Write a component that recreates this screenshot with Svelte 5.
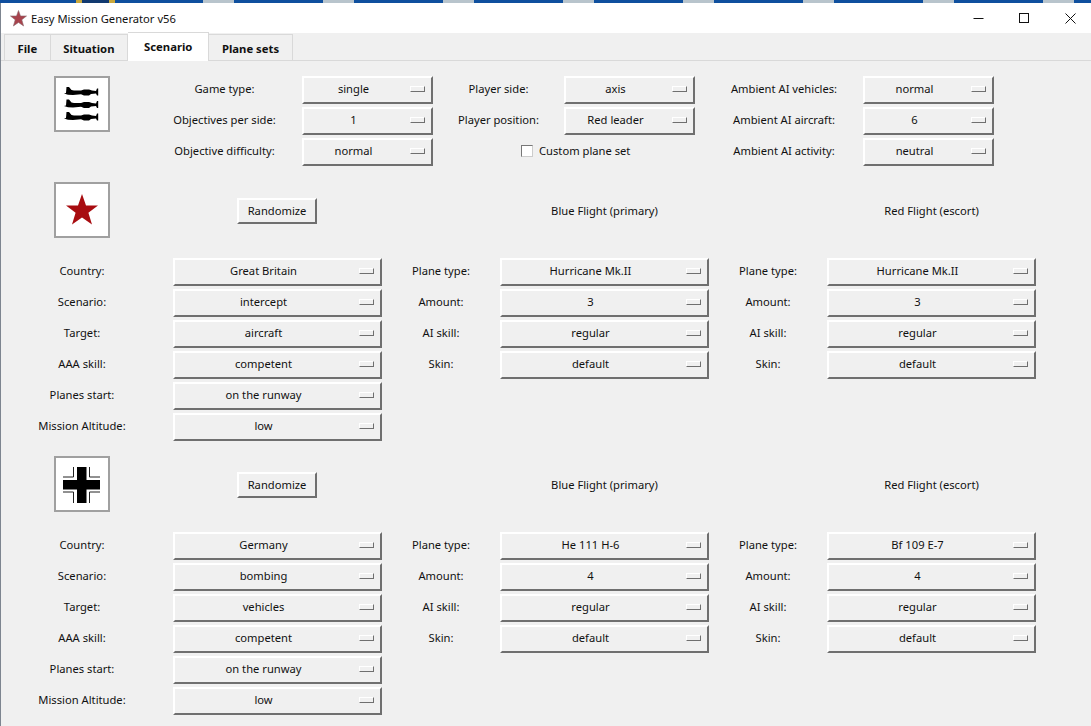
<script lang="ts">
	const topRows = [
		['Game type:', 'single', 'Player side:', 'axis', 'Ambient AI vehicles:', 'normal'],
		['Objectives per side:', '1', 'Player position:', 'Red leader', 'Ambient AI aircraft:', '6'],
		['Objective difficulty:', 'normal', null, null, 'Ambient AI activity:', 'neutral']
	];

	const flightLabels = ['Plane type:', 'Amount:', 'AI skill:', 'Skin:'];
	const sideLabels = ['Country:', 'Scenario:', 'Target:', 'AAA skill:', 'Planes start:', 'Mission Altitude:'];

	const sides = [
		{
			icon: 'star',
			values: ['Great Britain', 'intercept', 'aircraft', 'competent', 'on the runway', 'low'],
			blue: ['Hurricane Mk.II', '3', 'regular', 'default'],
			red: ['Hurricane Mk.II', '3', 'regular', 'default']
		},
		{
			icon: 'cross',
			values: ['Germany', 'bombing', 'vehicles', 'competent', 'on the runway', 'low'],
			blue: ['He 111 H-6', '4', 'regular', 'default'],
			red: ['Bf 109 E-7', '4', 'regular', 'default']
		}
	];

	const tabs = ['File', 'Situation', 'Scenario', 'Plane sets'];
	let active = $state('Scenario');
	let customSet = $state(false);
</script>

{#snippet option(value: string)}
	<button class="option">
		<span>{value}</span>
		<span class="indicator"></span>
	</button>
{/snippet}

<div class="desktop"></div>
<div class="window">
	<header class="titlebar">
		<svg class="app-icon" width="17" height="17" viewBox="0 0 17 17">
			<polygon points="8.5,0.5 10.5,6 16.5,6 11.8,9.8 13.6,16 8.5,12.4 3.4,16 5.2,9.8 0.5,6 6.5,6" fill="#a8424c" stroke="#8c6a6e" stroke-width="0.6" />
		</svg>
		<span class="title">Easy Mission Generator v56</span>
		<div class="controls">
			<svg width="11" height="11" viewBox="0 0 11 11"><path d="M0.5 5.5H10.5" stroke="#111" fill="none" /></svg>
			<svg width="11" height="11" viewBox="0 0 11 11"><rect x="0.5" y="0.5" width="9" height="9" stroke="#111" fill="none" /></svg>
			<svg width="11" height="11" viewBox="0 0 11 11"><path d="M0.5 0.5L10.5 10.5M10.5 0.5L0.5 10.5" stroke="#111" fill="none" /></svg>
		</div>
	</header>

	<nav class="tabs">
		{#each tabs as tab}
			<button class="tab" class:active={tab === active} onclick={() => (active = tab)}>{tab}</button>
		{/each}
	</nav>

	<main class="content">
		<section class="top-grid">
			<div class="icon-box top-icon">
				<svg width="36" height="34" viewBox="0 0 36 34">
					{#each [5, 17.5, 30] as y}
						<path
							transform="translate(0 {y})"
							d="M0 1.5L2 1L2.5 -5L5 -5L7.5 -2L10 -1.5L17 -1.5L20 -2.5L25 -2.5L28 -1.5L32 -1L33 -3.5L34.2 -3.5L34.2 3.5L33 3.5L32 1.5L27 2L25 3.5L20 3.5L17 2.2L9 3L4 2.8Z"
							fill="#000"
						/>
					{/each}
				</svg>
			</div>
			{#each topRows as row}
				<span class="top-label l1">{row[0]}</span>
				{@render option(row[1] as string)}
				{#if row[2]}
					<span class="top-label">{row[2]}</span>
					{@render option(row[3] as string)}
				{:else}
					<label class="check">
						<input type="checkbox" bind:checked={customSet} />
						<span>Custom plane set</span>
					</label>
				{/if}
				<span class="top-label l3">{row[4]}</span>
				{@render option(row[5] as string)}
			{/each}
		</section>

		{#each sides as side}
			<section class="side">
				<div class="side-head">
					<div class="icon-box">
						{#if side.icon === 'star'}
							<svg width="34" height="34" viewBox="0 0 34 34">
								<polygon points="17,1 21,12.6 33,12.6 23.4,19.8 27,31.5 17,24.4 7,31.5 10.6,19.8 1,12.6 13,12.6" fill="#a80c10" />
							</svg>
						{:else}
							<svg width="38" height="38" viewBox="0 -2 38 38">
								<path d="M10.5 0V10H0M26.5 0V10H37M10.5 36V25H0M26.5 36V25H37" fill="none" stroke="#222" stroke-width="1" />
								<path d="M14 0H23.5V13H37V22.5H23.5V36H14V22.5H0V13H14Z" fill="#000" />
							</svg>
						{/if}
					</div>
					<button class="randomize">Randomize</button>
					<span class="flight-title blue">Blue Flight (primary)</span>
					<span class="flight-title red">Red Flight (escort)</span>
				</div>

				<div class="side-grid">
					{#each sideLabels as label, i}
						<span class="side-label">{label}</span>
						{@render option(side.values[i])}
						{#if i < flightLabels.length}
							<span class="flight-label">{flightLabels[i]}</span>
							{@render option(side.blue[i])}
							<span class="flight-label">{flightLabels[i]}</span>
							{@render option(side.red[i])}
						{:else}
							<span class="filler"></span>
						{/if}
					{/each}
				</div>
			</section>
		{/each}
	</main>
</div>

<style>
	:global(body) {
		margin: 0;
		background: #f0f0f0;
		overflow: hidden;
	}

	.desktop {
		height: 3px;
		background-color: #0f4f9e;
		background-image:
			linear-gradient(90deg, #0f4f9e 0 76px, #c9a83c 76px 82px, #123a70 82px 109px, #c9a83c 109px 115px),
			linear-gradient(90deg, #b8c4cc 0 31px, transparent 31px);
		background-size: 115px 3px, 120px 3px;
		background-position: 0 0, 203px 0;
		background-repeat: no-repeat, repeat-x;
	}

	.window {
		height: 723px;
		font-family: 'Noto Sans', 'Open Sans', sans-serif;
		font-size: 11.2px;
		color: #111;
		background: #f0f0f0;
		border-left: 1px solid #7d8590;
		box-sizing: border-box;
		overflow: hidden;
	}

	.titlebar {
		height: 30px;
		background: #fff;
		display: flex;
		align-items: center;
		padding-left: 9px;
	}

	.app-icon {
		margin-right: 4px;
	}

	.title {
		font-size: 11.2px;
	}

	.controls {
		margin-left: auto;
		display: flex;
		gap: 35px;
		padding-right: 15px;
	}

	.tabs {
		height: 28px;
		display: flex;
		align-items: flex-end;
		padding-left: 3px;
		border-bottom: 1px solid #d9d9d9;
		box-sizing: border-box;
	}

	.tab {
		height: 26px;
		padding: 2px 12.5px 0;
		font: bold 11.3px 'Noto Sans', sans-serif;
		color: #111;
		background: #f0f0f0;
		border: 1px solid #d9d9d9;
		border-bottom: none;
		border-left: none;
	}

	.tab:first-child {
		border-left: 1px solid #d9d9d9;
	}

	.tab.active {
		height: 29px;
		background: #fff;
		padding: 0 16px 2px;
		position: relative;
		top: 1px;
		border-left: none;
	}

	.content {
		padding-top: 15px;
	}

	.top-grid {
		display: grid;
		grid-template-columns: 115px 133px 131px 131px 131px 168px 131px;
		grid-auto-rows: 28px;
		row-gap: 3px;
		margin-left: 53px;
	}

	.top-icon {
		grid-row: 1 / span 2;
		grid-column: 1;
	}

	.top-label,
	.side-label,
	.flight-label {
		display: flex;
		align-items: center;
		justify-content: center;
		padding-bottom: 3px;
		white-space: nowrap;
	}

	.l1 {
		grid-column: 2;
		padding-right: 22px;
	}

	.l3 {
		padding-left: 10px;
	}

	.icon-box {
		width: 52px;
		height: 52px;
		background: #fff;
		border: 2px solid #a0a0a0;
		display: flex;
		align-items: center;
		justify-content: center;
		justify-self: start;
		align-self: start;
	}

	.option {
		position: relative;
		height: 28px;
		padding: 0 28px 4px 0;
		font: inherit;
		color: inherit;
		background: #f0f0f0;
		border: 2px solid;
		border-color: #fff #6f6f6f #6f6f6f #fff;
		box-sizing: border-box;
		display: flex;
		align-items: center;
		justify-content: center;
		white-space: nowrap;
	}

	.indicator {
		position: absolute;
		right: 6px;
		top: 8px;
		width: 15px;
		height: 6px;
		box-sizing: border-box;
		background: #f0f0f0;
		border: 1px solid;
		border-color: #fff #6f6f6f #6f6f6f #fff;
	}

	.check {
		grid-column: span 2;
		display: flex;
		align-items: center;
		gap: 6px;
		padding-left: 88px;
		padding-bottom: 3px;
		white-space: nowrap;
	}

	.check input {
		appearance: none;
		margin: 0;
		width: 12px;
		height: 12px;
		background: #fff;
		border: 1px solid;
		border-color: #777 #ccc #ccc #777;
		box-sizing: border-box;
	}

	.top-grid + .side {
		margin-top: 16px;
	}

	.side + .side {
		margin-top: 15px;
	}

	.side-head {
		display: grid;
		grid-template-columns: 53px 183px 80px 183px 209px 118px 209px;
		height: 56px;
		margin-bottom: 20px;
	}

	.side-head .icon-box {
		grid-column: 2;
	}

	.randomize {
		grid-column: 3;
		align-self: start;
		margin-top: 16px;
		height: 26px;
		padding: 0 0 2px;
		font: inherit;
		color: inherit;
		background: #f0f0f0;
		border: 2px solid;
		border-color: #fff #6f6f6f #6f6f6f #fff;
	}

	.flight-title {
		text-align: center;
		margin-top: 21px;
		white-space: nowrap;
	}

	.flight-title.blue {
		grid-column: 5;
	}

	.flight-title.red {
		grid-column: 7;
	}

	.side-grid {
		display: grid;
		grid-template-columns: 172px 209px 118px 209px 118px 209px;
		grid-auto-rows: 28px;
		row-gap: 3px;
	}

	.side-label {
		padding-right: 10px;
	}

	.filler {
		grid-column: span 4;
	}
</style>
